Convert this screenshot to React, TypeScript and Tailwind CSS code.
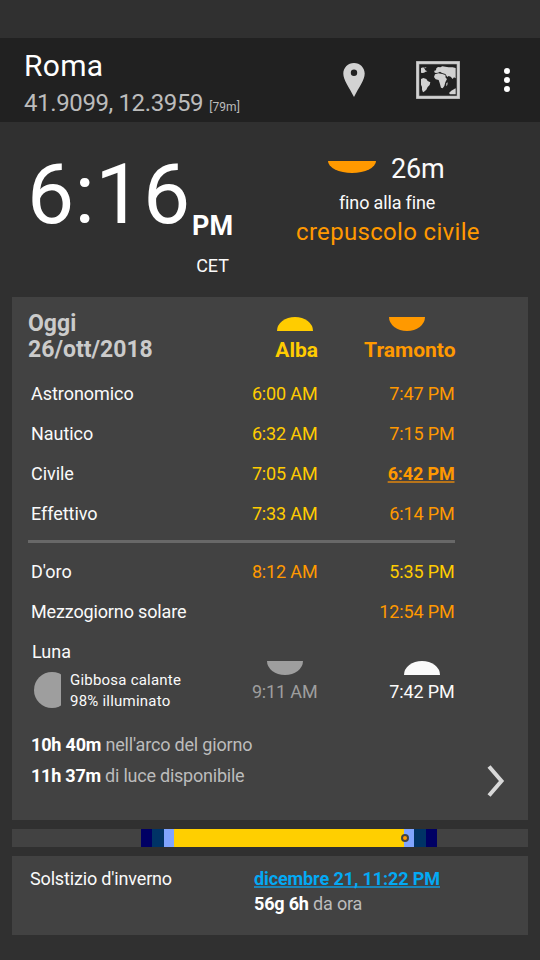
import type { ReactNode } from "react";

const up = "rounded-[50%_50%_0_0/100%_100%_0_0]";
const down = "rounded-[0_0_50%_50%/0_0_100%_100%]";
const underline = "underline decoration-2 underline-offset-1 [text-decoration-skip-ink:none]";

function HalfDisc({ className }: { className: string }) {
  return <div className={className} />;
}

function MapIcon() {
  return (
    <svg width="44" height="38" viewBox="0 0 132 114" className="block">
      <rect x="5" y="5" width="122" height="104" fill="none" stroke="#9a9a9a" strokeWidth="10" />
      <rect x="5" y="5" width="122" height="104" fill="none" stroke="#d2d2d2" strokeWidth="7" />
      <g fill="#d2d2d2">
        <path d="M15 21 L22 19 L26 23 L28 28 L34 31 L29 32 L24 35 L19 36 L15 35 Z" />
        <path d="M24 18 L32 20 L28 22 Z" />
        <path d="M15 54 L22 51 L31 54 L35 60 L43 64 L41 72 L35 78 L31 86 L24 92 L21 94 L18 86 L18 78 L15 71 Z" />
        <path d="M55 29 L60 28 L61 22 L66 18 L73 19 L79 16 L88 17 L98 19 L110 19 L119 21 L119 52 L114 49 L110 54 L104 47 L98 45 L94 48 L88 39 L78 36 L72 32 L66 35 L59 36 L55 34 Z" />
        <path d="M57 40 L67 37 L79 39 L88 42 L89 50 L93 54 L88 64 L85 75 L80 82 L75 80 L71 66 L68 57 L59 55 L54 48 Z" />
        <path d="M91 67 L95 64 L94 72 L91 76 Z" />
        <path d="M99 96 L106 89 L116 83 L119 82 L119 100 L102 100 Z" />
      </g>
    </svg>
  );
}

function Row({ label, rise, set, riseClass, setClass, labelClass = "tracking-[-0.04px]" }: {
  label: string;
  rise: string;
  set: ReactNode;
  riseClass: string;
  setClass: string;
  labelClass?: string;
}) {
  return (
    <div className="grid h-10 grid-cols-[200px_90px_137px] text-[18px] leading-10">
      <span className={`pl-[3px] text-[#fafafa] ${labelClass}`}>{label}</span>
      <span className={`pr-[0.5px] text-right tracking-[-0.15px] ${riseClass}`}>{rise}</span>
      <span className={`pr-[0.5px] text-right tracking-[-0.15px] ${setClass}`}>{set}</span>
    </div>
  );
}

const bands = [
  { w: 129, c: "bg-[#424242]" },
  { w: 11, c: "bg-[#000064]" },
  { w: 12, c: "bg-[#003366]" },
  { w: 10, c: "bg-[#80a4ff]" },
  { w: 230, c: "bg-[#ffcf00]" },
  { w: 10, c: "bg-[#80a4ff]" },
  { w: 12, c: "bg-[#003366]" },
  { w: 11, c: "bg-[#000064]" },
  { w: 91, c: "bg-[#424242]" },
];

export default function App() {
  return (
    <div className="flex h-[960px] w-[540px] flex-col overflow-hidden whitespace-nowrap bg-[#303030] pt-[38px] font-['Roboto',sans-serif] text-white">
      <header className="flex h-[84px] shrink-0 bg-[#212121]">
        <div className="w-[343px] pl-6 pt-[10px]">
          <h1 className="text-[30px] leading-9 tracking-[0.3px]">Roma</h1>
          <div className="mt-px flex items-baseline gap-[6px] text-[24px] leading-9 text-[#bcbcbc]">
            <span className="tracking-[-0.38px]">41.9099, 12.3959</span>
            <span className="text-[12px] tracking-[0.1px]">[79m]</span>
          </div>
        </div>
        <svg width="22" height="34" viewBox="0 0 22 34" className="mt-[25px] block">
          <path fillRule="evenodd" fill="#d2d2d2" d="M11 0 C17 0 21.7 4.7 21.7 10.5 C21.7 17 16 24 11 34 C6 24 .3 17 .3 10.5 C.3 4.7 5 0 11 0 Z M11 6.5 a3.2 3.2 0 1 0 0 6.4 a3.2 3.2 0 1 0 0-6.4 Z" />
        </svg>
        <div className="ml-[51px] mt-[23px]"><MapIcon /></div>
        <div className="ml-11 mt-[30px] flex flex-col gap-[3px]">
          <i className="size-[6px] rounded-full bg-white" />
          <i className="size-[6px] rounded-full bg-white" />
          <i className="size-[6px] rounded-full bg-white" />
        </div>
      </header>

      <section className="flex h-[175px] shrink-0">
        <div className="w-[234px] pl-[27px]">
          <div className="flex pt-[23px]">
            <span className="text-[84px] leading-[100px] tracking-[0.4px]">6:16</span>
            <span className="ml-[1.5px] mt-[63px] text-[27px] font-bold leading-9">PM</span>
          </div>
          <div className="mt-[9px] pr-[5px] text-right text-[18px] leading-6 text-[#fafafa]">CET</div>
        </div>
        <div className="flex w-[306px] flex-col pt-7 text-[#fafafa]">
          <div className="flex pl-[94px]">
            <HalfDisc className={`mt-[11px] h-3 w-12 bg-[#ff9900] ${down}`} />
            <span className="ml-[15px] text-[27px] leading-[39px] tracking-[-0.2px]">26m</span>
          </div>
          <div className="mt-px pl-[105px] text-[18px] leading-[26px] tracking-[-0.15px]">fino alla fine</div>
          <div className="pl-[62px] text-[24px] leading-8 tracking-[0.32px] text-[#ff9900]">crepuscolo civile</div>
        </div>
      </section>

      <main className="mx-3 h-[523px] shrink-0 bg-[#424242] pl-4">
        <div className="grid h-[77px] grid-cols-[200px_90px_137px] pt-[13px] font-bold">
          <div className="pt-px text-[23px] leading-[26px] text-[#cbcbcb]">
            Oggi<br />26/ott/2018
          </div>
          <div className="flex flex-col items-end pt-[7px] text-[21px] text-[#ffcc00]">
            <HalfDisc className={`mr-[5px] h-[14px] w-9 bg-[#ffcc00] ${up}`} />
            <span className="mt-[6px] leading-[26px]">Alba</span>
          </div>
          <div className="flex flex-col items-end pt-[7px] text-[21px] text-[#ff9900]">
            <HalfDisc className={`mr-[30px] h-[14px] w-9 bg-[#ff9900] ${down}`} />
            <span className="-mr-[0.5px] mt-[6px] leading-[26px]">Tramonto</span>
          </div>
        </div>
        <Row label="Astronomico" rise="6:00 AM" set="7:47 PM" riseClass="text-[#ffcc00]" setClass="text-[#ff9900]" />
        <Row label="Nautico" rise="6:32 AM" set="7:15 PM" riseClass="text-[#ffcc00]" setClass="text-[#ff9900]" />
        <Row
          label="Civile"
          rise="7:05 AM"
          set={<span className={`decoration-[#b8741a] ${underline}`}>6:42 PM</span>}
          riseClass="text-[#ffcc00]"
          setClass="text-[#ff9900] font-bold"
        />
        <Row label="Effettivo" rise="7:33 AM" set="6:14 PM" riseClass="text-[#ffcc00]" setClass="text-[#ff9900]" />
        <div className="mb-[9px] mt-[6px] h-[3px] w-[427px] bg-[#686868]" />
        <Row label="D'oro" rise="8:12 AM" set="5:35 PM" riseClass="text-[#ff9900]" setClass="text-[#ffcc00]" />
        <Row label="Mezzogiorno solare" rise="" set="12:54 PM" riseClass="" setClass="text-[#ff9900]" labelClass="tracking-[-0.14px]" />
        <div className="grid h-[97px] grid-cols-[200px_90px_137px]">
          <div className="pl-1 text-[#fafafa]">
            <div className="text-[18px] leading-10">Luna</div>
            <div className="flex pl-[2px]">
              <div className="h-9 w-[27px] overflow-hidden">
                <div className="size-9 rounded-full bg-[#9e9e9e]" />
              </div>
              <div className="ml-[9px] mt-[-2px] text-[15px] leading-[21px] tracking-[0.22px]">
                Gibbosa calante<br />98% illuminato
              </div>
            </div>
          </div>
          <div className="flex flex-col items-end pt-[29px] text-[18px] text-[#9e9e9e]">
            <HalfDisc className={`mr-[15px] h-[14px] w-9 bg-[#9e9e9e] ${down}`} />
            <span className="mr-[0.5px] mt-[5px] leading-6 tracking-[-0.15px]">9:11 AM</span>
          </div>
          <div className="flex flex-col items-end pt-[29px] text-[18px] text-[#fafafa]">
            <HalfDisc className={`mr-[15px] h-[14px] w-9 bg-[#fafafa] ${up}`} />
            <span className="mr-[0.5px] mt-[5px] leading-6 tracking-[-0.15px]">7:42 PM</span>
          </div>
        </div>
        <div className="flex">
          <div className="w-[459px] pl-[3px] text-[18px] leading-[31px] tracking-[-0.18px] text-[#bcbcbc]">
            <div><b className="text-white">10h 40m</b> nell'arco del giorno</div>
            <div className="tracking-[-0.23px]"><b className="text-white">11h 37m</b> di luce disponibile</div>
          </div>
          <svg width="18" height="34" viewBox="0 0 18 34" className="mt-[35px] block" fill="none" stroke="#d8d8d8" strokeWidth="4">
            <path d="M2 2.5 L14.5 17 L2 31.5" />
          </svg>
        </div>
      </main>

      <div className="relative mx-3 mt-[9px] flex h-[18px] shrink-0">
        {bands.map((b, i) => (
          <div key={i} className={b.c} style={{ width: b.w }} />
        ))}
        <div className="absolute left-[389px] top-[5px] size-2 rounded-full border-2 border-[#424242] bg-[#ff9900]" />
      </div>

      <section className="mx-3 mt-[9px] flex h-[79px] shrink-0 bg-[#424242] pl-[18px] pt-[10px] text-[18px] leading-[25px]">
        <div className="w-[224px] tracking-[-0.16px] text-[#fafafa]">Solstizio d'inverno</div>
        <div className="text-[#bcbcbc]">
          <div className={`font-bold tracking-[-0.1px] text-[#03a9f4] decoration-[#1b85b8] ${underline}`}>dicembre 21, 11:22 PM</div>
          <div className="tracking-[-0.18px]"><b className="text-white">56g 6h</b> da ora</div>
        </div>
      </section>
    </div>
  );
}
